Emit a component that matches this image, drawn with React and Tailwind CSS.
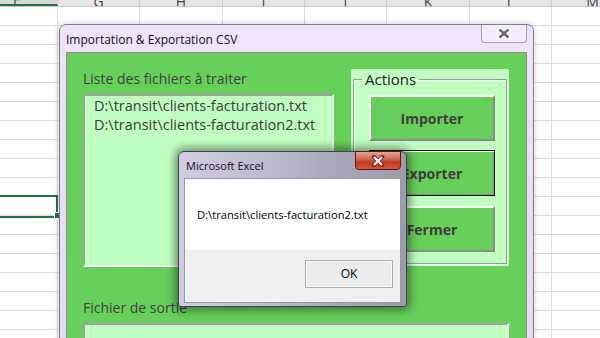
import React from 'react';

const COLS = [
  { w: 'w-[82px] -ml-[24px]', label: 'F' },
  { w: 'w-[82px]', label: 'G' },
  { w: 'w-[83px]', label: 'H' },
  { w: 'w-[82px]', label: 'I' },
  { w: 'w-[82px]', label: 'J' },
  { w: 'w-[83px]', label: 'K' },
  { w: 'w-[82px]', label: 'L' },
  { w: 'w-[82px]', label: 'M' },
];

const FILES = ['D:\\transit\\clients-facturation.txt', 'D:\\transit\\clients-facturation2.txt'];

function Sheet() {
  return (
    <div className="flex flex-col">
      {/* column headers, cut at the top */}
      <div className="flex h-[7px] overflow-hidden bg-[#e6e6e6] border-b border-[#c8c8c8]">
        {COLS.map((c, i) => (
          <div
            key={c.label}
            className={`${c.w} shrink-0 flex items-end justify-center border-r border-[#d0d0d0] ${i === 0 ? 'bg-[#d9d9d9] border-b-2 border-b-[#217346]' : ''}`}
          >
            <span className="text-[14px] leading-[14px] -mb-[3px] text-[#444]">{c.label}</span>
          </div>
        ))}
      </div>
      {Array.from({ length: 18 }).map((_, r) => (
        <div key={r} className="flex h-[19px] border-b border-[#dadada]">
          {COLS.map((c) => (
            <div key={c.label} className={`${c.w} shrink-0 border-r border-[#dadada]`} />
          ))}
        </div>
      ))}
    </div>
  );
}

function GreenButton({ children, focused }) {
  const base = 'w-[126px] h-[46px] ml-[15px] bg-[#67d05a] text-[14px] font-bold text-[#3d3d3d] flex items-center justify-center';
  if (focused) {
    return (
      <div className={`${base} border border-[#161616] shadow-[inset_1px_1px_0_#ffffff,inset_-1px_-1px_0_#8a8a8a]`}>
        {children}
      </div>
    );
  }
  return (
    <div className={`${base} border-2 border-t-white border-l-white border-b-[#8c8c8c] border-r-[#8c8c8c]`}>
      {children}
    </div>
  );
}

function UserForm() {
  return (
    <div className="absolute left-[59px] top-[24px] w-[475px] h-[330px] rounded-t-[7px] border border-[#7c7f86] bg-gradient-to-b from-[#efe4fb] to-[#e7d9f6] px-[6px] shadow-[0_0_6px_rgba(0,0,0,0.2)]">
      <div className="flex h-[27px] items-start justify-between">
        <span className="mt-[7px] text-[12px] leading-[15px] text-[#111]">Importation &amp; Exportation CSV</span>
        <div className="w-[46px] h-[18px] rounded-b-[4px] border-x border-b border-[#a99cb8] bg-[#f3ecfb] shadow-[inset_0_0_2px_#ffffff] flex items-center justify-center">
          <svg width="16" height="13" viewBox="0 0 16 13">
            <path d="M3.5 2.5 L12.5 10.5 M12.5 2.5 L3.5 10.5" stroke="#ffffff" strokeWidth="4.5" strokeLinecap="square" />
            <path d="M3.5 2.5 L12.5 10.5 M12.5 2.5 L3.5 10.5" stroke="#666666" strokeWidth="2.4" />
          </svg>
        </div>
      </div>

      <div className="h-[300px] border border-[#8f8f8f] bg-[#67d05a] pl-[16px] pt-[17px]">
        <div className="flex">
          <div className="w-[251px]">
            <div className="h-[24px] text-[14px] leading-[18px] text-[#404040]">Liste des fichiers à traiter</div>
            <div className="h-[173px] border-2 border-t-[#a0a0a0] border-l-[#a0a0a0] border-b-[#f6f6f6] border-r-[#f6f6f6] bg-[#c0ffc0] pl-[9px]">
              {FILES.map((f) => (
                <div key={f} className="text-[14.5px] leading-[19px] text-[#3c3c3c] whitespace-nowrap">{f}</div>
              ))}
            </div>
          </div>

          <div className="ml-[17px] -mt-[1px] w-[158px] h-[197px] bg-[#c0ffc0] px-[2px]">
            <fieldset className="h-[195px] border border-[#9a9a9a] shadow-[1px_1px_0_#ffffff,inset_1px_1px_0_#ffffff]">
              <legend className="ml-[8px] px-[3px] text-[15px] leading-[20px] text-[#1c1c1c]">Actions</legend>
              <div className="flex flex-col pt-[6px]">
                <GreenButton>Importer</GreenButton>
                <div className="mt-[9px]">
                  <GreenButton focused>Exporter</GreenButton>
                </div>
                <div className="mt-[10px]">
                  <GreenButton>Fermer</GreenButton>
                </div>
              </div>
            </fieldset>
          </div>
        </div>

        <div className="mt-[32px] h-[24px] text-[14px] leading-[18px] text-[#404040]">Fichier de sortie</div>
        <div className="w-[426px] h-[24px] border-2 border-t-[#a0a0a0] border-l-[#a0a0a0] border-b-[#f6f6f6] border-r-[#f6f6f6] bg-[#c0ffc0]" />
      </div>
    </div>
  );
}

function MsgBox() {
  return (
    <div className="absolute left-[178px] top-[151px] w-[229px] h-[156px] rounded-t-[6px] rounded-b-[3px] border border-[#3e424c] bg-[linear-gradient(90deg,#d3cde2_0%,#c2bcd3_35%,#aaa6b9_70%,#9c9bab_100%)] px-[5px] shadow-[0_0_10px_3px_rgba(0,0,0,0.45)]">
      <div className="flex h-[26px] items-start justify-between">
        <span className="mt-[6px] ml-[2px] text-[11px] leading-[15px] text-[#111]">Microsoft Excel</span>
        <div className="-mt-[1px] w-[46px] h-[19px] rounded-b-[4px] border border-[#5b1a10] bg-[linear-gradient(180deg,#e4a394_0%,#d36a55_40%,#c0391f_60%,#d0583d_100%)] flex items-center justify-center">
          <svg width="14" height="12" viewBox="0 0 14 12">
            <path d="M3 2 L11 10 M11 2 L3 10" stroke="#7a2a1c" strokeWidth="4" strokeLinecap="square" />
            <path d="M3 2 L11 10 M11 2 L3 10" stroke="#ffffff" strokeWidth="2.2" />
          </svg>
        </div>
      </div>
      <div className="border border-[#9a98a8]">
        <div className="h-[71px] bg-white pl-[12px] pt-[28px] text-[11.2px] leading-[16px] text-black">
          D:\transit\clients-facturation2.txt
        </div>
        <div className="h-[52px] bg-[#f0f0f0] flex justify-end items-start pt-[10px] pr-[7px]">
          <div className="w-[88px] h-[28px] border border-[#acacac] bg-[#ececec] shadow-[inset_0_0_0_1px_#fbfbfb] flex items-center justify-center text-[12px] text-black">
            OK
          </div>
        </div>
      </div>
    </div>
  );
}

export default function App() {
  return (
    <div className="relative w-[600px] h-[338px] overflow-hidden bg-white font-['Open_Sans',sans-serif]">
      <Sheet />
      {/* selected cell */}
      <div className="absolute left-[-3px] top-[195px] w-[61px] h-[23px] border-2 border-[#217346]" />
      <div className="absolute left-[54px] top-[212px] w-[7px] h-[7px] border border-white bg-[#217346]" />
      <UserForm />
      <MsgBox />
    </div>
  );
}
